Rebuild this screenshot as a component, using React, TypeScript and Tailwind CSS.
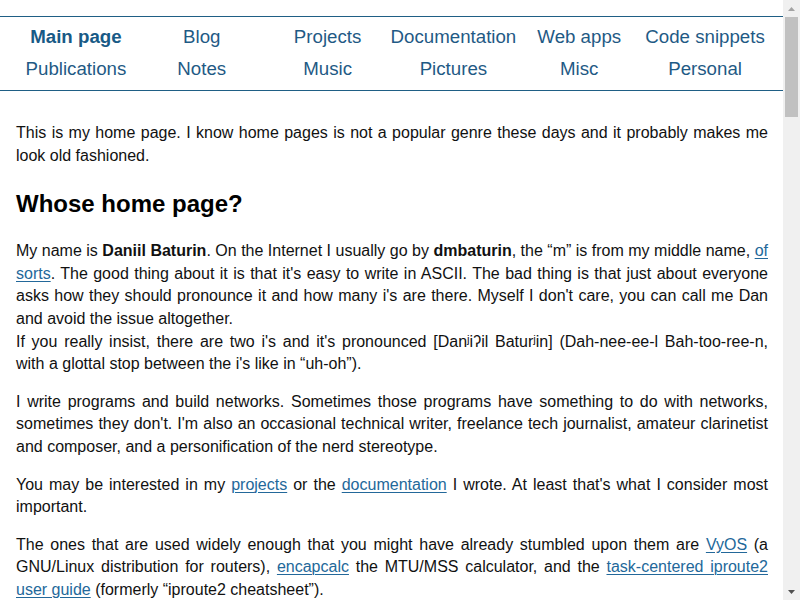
import React from 'react';

const navItems = [
  { label: 'Main page', active: true },
  { label: 'Blog' },
  { label: 'Projects' },
  { label: 'Documentation' },
  { label: 'Web apps' },
  { label: 'Code snippets' },
  { label: 'Publications' },
  { label: 'Notes' },
  { label: 'Music' },
  { label: 'Pictures' },
  { label: 'Misc' },
  { label: 'Personal' },
];

function A({ children }: { children: React.ReactNode }) {
  return (
    <a href="#" className="text-[#23689a] underline underline-offset-2 decoration-1">
      {children}
    </a>
  );
}

// Windows-style page scrollbar, as it shows in the screenshot
function Scrollbar() {
  return (
    <div className="flex w-[17px] shrink-0 flex-col bg-[#f0f0f0]">
      <div className="flex h-[17px] items-center justify-center">
        <svg width="7" height="4" viewBox="0 0 7 4">
          <path d="M3.5 0 L7 4 L0 4 Z" fill="#a3a3a3" />
        </svg>
      </div>
      <div className="flex-1 px-[2px]">
        <div className="h-[100px] bg-[#c1c1c1]" />
      </div>
      <div className="flex h-[17px] items-center justify-center">
        <svg width="7" height="4" viewBox="0 0 7 4">
          <path d="M0 0 L7 0 L3.5 4 Z" fill="#505050" />
        </svg>
      </div>
    </div>
  );
}

export default function App() {
  return (
    <div className="flex h-[600px] overflow-hidden bg-white font-['Liberation_Sans',Arial,sans-serif] text-[#111]">
      <div className="min-w-0 flex-1">
        {/* Top navigation */}
        <nav className="pt-4">
          <ul className="grid grid-cols-6 border-y border-[#1f5f85] pt-1 pb-[5px] pl-[13px] pr-[15px]">
            {navItems.map((item) => (
              <li key={item.label} className="text-center text-[18.7px] leading-[32px]">
                <a
                  href="#"
                  className={item.active ? 'font-bold text-[#185a86]' : 'text-[#1f5a85]'}
                >
                  {item.label}
                </a>
              </li>
            ))}
          </ul>
        </nav>

        {/* Main content */}
        <main className="pl-4 pr-[15px] pt-[31px] text-[16px] leading-[22.6px] text-justify">
          <p>
            This is my home page. I know home pages is not a popular genre these days and it
            probably makes me look old fashioned.
          </p>

          <h2 className="mt-[21px] mb-5 text-left text-[24px] font-bold leading-[32px] text-black">
            Whose home page?
          </h2>

          <p>
            My name is <strong>Daniil Baturin</strong>. On the Internet I usually go by{' '}
            <strong>dmbaturin</strong>, the “m” is from my middle name, <A>of sorts</A>. The good
            thing about it is that it's easy to write in ASCII. The bad thing is that just about
            everyone asks how they should pronounce it and how many i's are there. Myself I don't
            care, you can call me Dan and avoid the issue altogether.
            <br />
            If you really insist, there are two i's and it's pronounced [Danʲiʔil Baturʲin]
            (Dah-nee-ee-l Bah-too-ree-n, with a glottal stop between the i's like in “uh-oh”).
          </p>

          <p className="mt-[15px]">
            I write programs and build networks. Sometimes those programs have something to do with
            networks, sometimes they don't. I'm also an occasional technical writer, freelance tech
            journalist, amateur clarinetist and composer, and a personification of the nerd
            stereotype.
          </p>

          <p className="mt-[15px]">
            You may be interested in my <A>projects</A> or the <A>documentation</A> I wrote. At
            least that's what I consider most important.
          </p>

          <p className="mt-[15px]">
            The ones that are used widely enough that you might have already stumbled upon them are{' '}
            <A>VyOS</A> (a GNU/Linux distribution for routers), <A>encapcalc</A> the MTU/MSS
            calculator, and the <A>task-centered iproute2 user guide</A> (formerly “iproute2
            cheatsheet”).
          </p>
        </main>
      </div>
      <Scrollbar />
    </div>
  );
}
